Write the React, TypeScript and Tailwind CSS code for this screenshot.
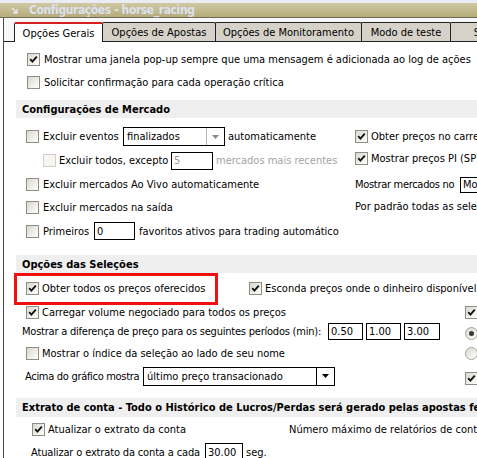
import clsx from 'clsx';
import type { ReactNode } from 'react';

function Check({ checked = false, disabled = false }: { checked?: boolean; disabled?: boolean }) {
  return (
    <span
      className={clsx(
        'inline-flex h-[13px] w-[13px] shrink-0 items-center justify-center border',
        disabled
          ? 'border-[#d2d0c6] bg-[#f5f5f1]'
          : 'border-[#8d8e86] bg-linear-to-br from-[#d9d8d0] to-white',
      )}
    >
      {checked && (
        <svg width="9" height="9" viewBox="0 0 9 9">
          <path d="M1.2 4.2 L3.4 6.6 L7.8 1.6" stroke="#141414" strokeWidth="1.9" fill="none" />
        </svg>
      )}
    </span>
  );
}

function Radio({ checked = false }: { checked?: boolean }) {
  return (
    <span className="inline-flex h-[13px] w-[13px] shrink-0 items-center justify-center rounded-full border border-[#a3a39a] bg-linear-to-br from-[#d9d8d0] to-white">
      {checked && <span className="h-[5px] w-[5px] rounded-full bg-[#3a3a3a]" />}
    </span>
  );
}

function Field({ w, h = 'h-[18px]', value, muted = false }: { w: string; h?: string; value: string; muted?: boolean }) {
  return (
    <span className={clsx('inline-flex shrink-0 items-center border border-black bg-white pl-[2px]', w, h, muted && 'text-[#9a9a9a]')}>
      {value}
    </span>
  );
}

function Select({ w, value, dim = false }: { w: string; value: string; dim?: boolean }) {
  return (
    <span className={clsx('inline-flex h-[19px] shrink-0 items-center border border-black bg-white', w)}>
      <span className="flex-1 pl-[3px]">{value}</span>
      <span className={clsx('flex h-full w-[18px] items-center justify-center border-l', dim ? 'border-[#b5b5b5]' : 'border-black')}>
        <svg width="7" height="4" viewBox="0 0 7 4">
          <path d="M0 0 H7 L3.5 4 Z" fill={dim ? '#8a8a8a' : '#000'} />
        </svg>
      </span>
    </span>
  );
}

function Band({ children, className }: { children: ReactNode; className?: string }) {
  return (
    <div className={clsx('ml-[12px] flex items-center bg-[#efefef] pl-[6px] font-bold', className)}>{children}</div>
  );
}

const tabs = [
  { label: 'Opções Gerais', w: 'w-[89px]', active: true },
  { label: 'Opções de Apostas', w: 'w-[114px]' },
  { label: 'Opções de Monitoramento', w: 'w-[147px]' },
  { label: 'Modo de teste', w: 'w-[90px]' },
  { label: 'Stop', w: 'w-[70px]' },
];

export default function App() {
  return (
    <div className="h-[458px] w-[477px] overflow-hidden whitespace-nowrap bg-white text-[11px] leading-none text-black font-['DejaVu_Sans_Condensed','DejaVu_Sans',sans-serif]">
      <div className="h-[3px] bg-[#e9ecf3]" />

      {/* barra de título */}
      <div className="flex h-[15px] items-center border-b border-[#6f6b52] bg-linear-to-b from-[#d0c8a2] to-[#b6ac7c]">
        <svg className="ml-[11px]" width="7" height="7" viewBox="0 0 7 7">
          <path d="M1 1 L5.5 5.5 M6 2 V6 H2" stroke="#e6eaf2" strokeWidth="1.3" fill="none" />
        </svg>
        <span className="ml-[11px] text-[12px] font-bold tracking-[-0.4px] text-[#dbe2ef]">Configurações - horse_racing</span>
      </div>

      <div className="ml-[3px] w-[700px] border-l border-[#4a4a4a]">
        {/* abas */}
        <div className="flex h-[24px] items-end border-b border-[#222] bg-[#f7f7f7] pl-[10px]">
          {tabs.map((t, i) => (
            <div
              key={t.label}
              className={clsx(
                'flex h-[19px] shrink-0 items-center justify-center rounded-t-[2px] border-x border-[#222]',
                t.w,
                i > 0 && '-ml-px',
                t.active
                  ? 'relative z-10 -mb-px h-[20px] border-t-2 border-t-[#d42020] bg-white'
                  : 'border-t bg-[#d6d2ca]',
              )}
            >
              {t.label}
            </div>
          ))}
        </div>

        <div className="pt-[6px]">
          <div className="flex h-[23px] items-center pl-[23px]">
            <Check checked />
            <span className="ml-[4px]">Mostrar uma janela pop-up sempre que uma mensagem é adicionada ao log de ações</span>
          </div>
          <div className="flex h-[23px] items-center pl-[23px]">
            <Check />
            <span className="ml-[4px]">Solicitar confirmação para cada operação crítica</span>
          </div>

          {/* Configurações de Mercado */}
          <Band className="mt-[6px] h-[18px]">Configurações de Mercado</Band>
          <div className="flex pt-[7px]">
            <div className="w-[351px] shrink-0 pl-[22px]">
              <div className="flex h-[23px] items-center">
                <Check />
                <span className="ml-[4px] w-[80px] shrink-0">Excluir eventos</span>
                <Select w="w-[102px]" value="finalizados" dim />
                <span className="ml-[3px]">automaticamente</span>
              </div>
              <div className="flex h-[25px] items-center pl-[17px]">
                <Check disabled />
                <span className="ml-[3px] w-[112px] shrink-0">Excluir todos, excepto</span>
                <Field w="w-[42px]" value="5" muted />
                <span className="ml-[3px] text-[#a3a3a3]">mercados mais recentes</span>
              </div>
              <div className="flex h-[23px] items-center">
                <Check />
                <span className="ml-[4px]">Excluir mercados Ao Vivo automaticamente</span>
              </div>
              <div className="flex h-[23px] items-center">
                <Check />
                <span className="ml-[4px]">Excluir mercados na saída</span>
              </div>
              <div className="flex h-[24px] items-center">
                <Check />
                <span className="ml-[4px] w-[51px] shrink-0">Primeiros</span>
                <Field w="w-[41px]" value="0" />
                <span className="ml-[4px]">favoritos ativos para trading automático</span>
              </div>
            </div>
            <div className="shrink-0">
              <div className="flex h-[23px] items-center">
                <Check checked />
                <span className="ml-[3px]">Obter preços no carregamento</span>
              </div>
              <div className="flex h-[20px] items-center">
                <Check checked />
                <span className="ml-[3px]">Mostrar preços PI (SP)</span>
              </div>
              <div className="mt-[5px] flex h-[23px] items-center">
                <span className="w-[105px] shrink-0 tracking-[-0.3px]">Mostrar mercados no</span>
                <Field w="w-[80px]" h="h-[16px]" value="Mo" />
              </div>
              <div className="flex h-[20px] items-center">
                <span>Por padrão todas as seleções</span>
              </div>
            </div>
          </div>

          {/* Opções das Seleções */}
          <Band className="mt-[12px] h-[18px]">Opções das Seleções</Band>
          <div className="relative flex h-[31px] items-center pl-[22px]">
            <div className="pointer-events-none absolute top-0 left-[10px] h-[32px] w-[204px] border-[3px] border-[#f01010]" />
            <div className="flex w-[223px] shrink-0 items-center">
              <Check checked />
              <span className="ml-[3px]">Obter todos os preços oferecidos</span>
            </div>
            <Check checked />
            <span className="ml-[3px]">Esconda preços onde o dinheiro disponível é menor</span>
          </div>
          <div className="flex h-[16px] items-center pl-[22px]">
            <div className="flex w-[439px] shrink-0 items-center">
              <Check checked />
              <span className="ml-[3px]">Carregar volume negociado para todos os preços</span>
            </div>
            <Check checked />
          </div>
          <div className="flex h-[23px] items-center pl-[18px]">
            <div className="flex w-[443px] shrink-0 items-center">
              <span className="w-[306px] shrink-0 tracking-[-0.22px]">
                Mostrar a diferença de preço para os seguintes períodos (min):
              </span>
              <Field w="w-[35px]" h="h-[17px]" value="0.50" />
              <span className="w-[3px] shrink-0" />
              <Field w="w-[35px]" h="h-[17px]" value="1.00" />
              <span className="w-[3px] shrink-0" />
              <Field w="w-[36px]" h="h-[17px]" value="3.00" />
            </div>
            <span className="mt-[3px] flex">
              <Radio checked />
            </span>
          </div>
          <div className="flex h-[21px] items-center pl-[22px]">
            <div className="flex w-[439px] shrink-0 items-center">
              <Check />
              <span className="ml-[3px]">Mostrar o índice da seleção ao lado de seu nome</span>
            </div>
            <Radio />
          </div>
          <div className="flex h-[24px] items-center pl-[21px]">
            <div className="flex w-[440px] shrink-0 items-center">
              <span className="w-[118px] shrink-0 tracking-[-0.3px]">Acima do gráfico mostra</span>
              <Select w="w-[192px]" value="último preço transacionado" />
            </div>
            <span className="mt-[5px] flex">
              <Check checked />
            </span>
          </div>

          {/* Extrato de conta */}
          <Band className="mt-[10px] h-[19px]">
            Extrato de conta - Todo o Histórico de Lucros/Perdas será gerado pelas apostas feitas
          </Band>
          <div className="flex h-[24px] items-center pl-[28px]">
            <div className="flex w-[257px] shrink-0 items-center">
              <Check checked />
              <span className="ml-[3px]">Atualizar o extrato da conta</span>
            </div>
            <span>Número máximo de relatórios de conta:</span>
          </div>
          <div className="flex h-[22px] items-center pl-[27px]">
            <span className="w-[174px] shrink-0 tracking-[-0.15px]">Atualizar o extrato da conta a cada</span>
            <Field w="w-[38px]" h="h-[18px]" value="30.00" />
            <span className="ml-[3px]">seg.</span>
          </div>
        </div>
      </div>
    </div>
  );
}
